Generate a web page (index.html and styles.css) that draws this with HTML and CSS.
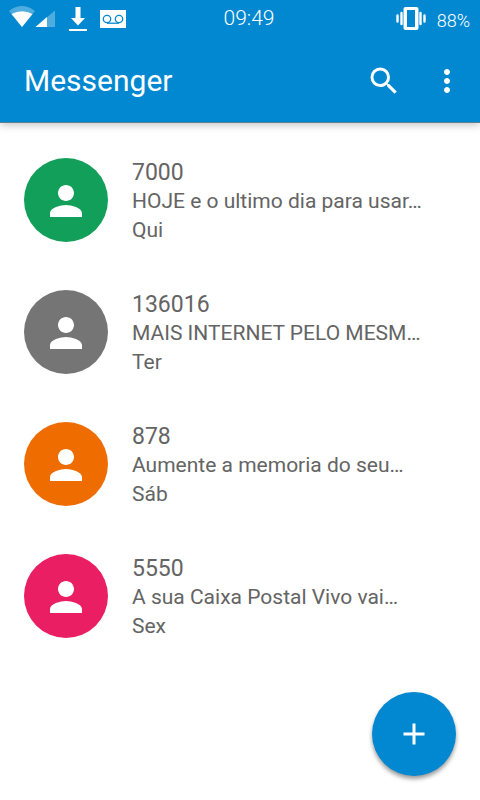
FILE: index.html
```html
<!DOCTYPE html>
<html lang="pt-BR">
<head>
<meta charset="utf-8">
<meta name="viewport" content="width=device-width, initial-scale=1">
<title>Messenger</title>
<link rel="stylesheet" href="styles.css">
</head>
<body>
<header class="top">
  <div class="status">
    <div class="status-side">
      <svg class="signal" width="48" height="38" viewBox="0 0 48 38" aria-hidden="true">
        <path class="dim" d="M1 11Q14 1 27 11L14 27Z"/>
        <path class="solid" d="M3.500 14Q14 8.500 24.500 14L14 27Z"/>
        <path class="dim" d="M47 10.500V27H27.500Z"/>
        <path class="solid" d="M39 17V27H27.500Z"/>
      </svg>
      <svg width="18" height="38" viewBox="0 0 18 38" aria-hidden="true">
        <path class="solid" d="M6.500 7H11.500V18H16L9 25.500L2 18H6.500ZM0 29H18V31H0Z"/>
      </svg>
      <svg width="26" height="38" viewBox="0 0 26 38" aria-hidden="true">
        <path class="solid" d="M0 10H26V28H0Z"/>
        <g class="tape"><circle cx="7" cy="19" r="3.700"/><circle cx="19" cy="19" r="3.700"/><path d="M7 23.200H19"/></g>
      </svg>
    </div>
    <time class="clock">09:49</time>
    <div class="status-side status-end">
      <svg width="30" height="38" viewBox="0 0 30 38" aria-hidden="true">
        <path class="solid" fill-rule="evenodd" d="M9.500 7H20.500Q22.500 7 22.500 9V28Q22.500 30 20.500 30H9.500Q7.500 30 7.500 28V9Q7.500 7 9.500 7ZM11 10V27H19V10Z"/>
        <path class="buzz" d="M1.500 15.500V21.500M5.500 13V24M24.500 13V24M28.500 15.500V21.500"/>
      </svg>
      <span class="battery">88%</span>
    </div>
  </div>
  <div class="bar">
    <h1>Messenger</h1>
    <button class="icon-button" type="button" aria-label="Pesquisar">
      <svg width="36" height="36" viewBox="0 0 24 24"><path class="solid" d="M15.500 14h-.79l-.28-.27A6.471 6.471 0 0 0 16 9.500 6.500 6.500 0 1 0 9.500 16c1.610 0 3.090-.59 4.230-1.570l.27.28v.79l5 4.990L20.490 19l-4.990-5zm-6 0C7.010 14 5 11.990 5 9.500S7.010 5 9.500 5 14 7.010 14 9.500 11.990 14 9.500 14z"/></svg>
    </button>
    <button class="icon-button" type="button" aria-label="Mais opções">
      <svg width="36" height="36" viewBox="0 0 24 24"><path class="solid" d="M12 8c1.100 0 2-.9 2-2s-.9-2-2-2-2 .9-2 2 .9 2 2 2zm0 2c-1.100 0-2 .9-2 2s.9 2 2 2 2-.9 2-2-.9-2-2-2zm0 6c-1.100 0-2 .9-2 2s.9 2 2 2 2-.9 2-2-.9-2-2-2z"/></svg>
    </button>
  </div>
</header>
<main>
  <ul class="threads">
    <li class="thread">
      <span class="avatar green"><svg width="48" height="48" viewBox="0 0 24 24" aria-hidden="true"><path class="solid" d="M12 12c2.210 0 4-1.790 4-4s-1.790-4-4-4-4 1.790-4 4 1.790 4 4 4zm0 2c-2.670 0-8 1.340-8 4v2h16v-2c0-2.660-5.330-4-8-4z"/></svg></span>
      <div class="text"><h2>7000</h2><p>HOJE e o ultimo dia para usar…</p><p>Qui</p></div>
    </li>
    <li class="thread">
      <span class="avatar gray"><svg width="48" height="48" viewBox="0 0 24 24" aria-hidden="true"><path class="solid" d="M12 12c2.210 0 4-1.790 4-4s-1.790-4-4-4-4 1.790-4 4 1.790 4 4 4zm0 2c-2.670 0-8 1.340-8 4v2h16v-2c0-2.660-5.330-4-8-4z"/></svg></span>
      <div class="text"><h2>136016</h2><p>MAIS INTERNET PELO MESM…</p><p>Ter</p></div>
    </li>
    <li class="thread">
      <span class="avatar orange"><svg width="48" height="48" viewBox="0 0 24 24" aria-hidden="true"><path class="solid" d="M12 12c2.210 0 4-1.790 4-4s-1.790-4-4-4-4 1.790-4 4 1.790 4 4 4zm0 2c-2.670 0-8 1.340-8 4v2h16v-2c0-2.660-5.330-4-8-4z"/></svg></span>
      <div class="text"><h2>878</h2><p>Aumente a memoria do seu…</p><p>Sáb</p></div>
    </li>
    <li class="thread">
      <span class="avatar pink"><svg width="48" height="48" viewBox="0 0 24 24" aria-hidden="true"><path class="solid" d="M12 12c2.210 0 4-1.790 4-4s-1.790-4-4-4-4 1.790-4 4 1.790 4 4 4zm0 2c-2.670 0-8 1.340-8 4v2h16v-2c0-2.660-5.330-4-8-4z"/></svg></span>
      <div class="text"><h2>5550</h2><p>A sua Caixa Postal Vivo vai…</p><p>Sex</p></div>
    </li>
  </ul>
</main>
<button class="compose" type="button" aria-label="Nova mensagem">
  <svg width="36" height="36" viewBox="0 0 36 36"><path class="solid" d="M16.500 7.500H19.500V16.500H28.500V19.500H19.500V28.500H16.500V19.500H7.500V16.500H16.500Z"/></svg>
</button>
</body>
</html>
```
FILE: styles.css
```css
* {
  box-sizing: border-box;
}

body {
  margin: 0;
  min-height: 100vh;
  background: #fff;
  color: #646464;
  font-family: Roboto, "Liberation Sans", sans-serif;
}

h1, h2, p, ul {
  margin: 0;
  padding: 0;
  font-weight: 400;
}

svg {
  display: block;
  flex: none;
}

.solid {
  fill: #fff;
}

.dim {
  fill: #fff;
  opacity: 0.3;
}

.tape {
  fill: none;
  stroke: #0288d1;
  stroke-width: 1.3;
}

.buzz {
  fill: none;
  stroke: #fff;
  stroke-width: 2.4;
  stroke-linecap: round;
}

.top {
  background: #0288d1;
  color: #fff;
  border-bottom: 1px solid #5c7f92;
  box-shadow: 0 2px 8px rgba(0, 0, 0, 0.24);
}

.status {
  display: grid;
  grid-template-columns: 1fr auto 1fr;
  align-items: start;
  height: 40px;
  padding: 0 10px 0 8px;
}

.status-side {
  display: flex;
  align-items: flex-start;
  gap: 13px;
}

.status-end {
  justify-content: flex-end;
  gap: 11px;
}

.clock {
  padding-left: 20px;
  font-size: 21px;
  font-weight: 300;
  line-height: 36px;
}

.battery {
  font-size: 18px;
  font-weight: 300;
  line-height: 42px;
}

.bar {
  display: flex;
  align-items: center;
  height: 82px;
  padding: 0 15px 0 24px;
}

.bar h1 {
  flex: 1;
  font-size: 30px;
  line-height: 36px;
}

button {
  padding: 0;
  border: 0;
  background: none;
  cursor: pointer;
}

.icon-button {
  display: grid;
  place-items: center;
  width: 36px;
  height: 48px;
}

.icon-button + .icon-button {
  margin-left: 27px;
}

.threads {
  list-style: none;
  padding-top: 11px;
}

.thread {
  display: flex;
  align-items: center;
  gap: 24px;
  height: 132px;
  padding: 0 24px;
}

.avatar {
  display: grid;
  place-items: center;
  flex: none;
  width: 84px;
  height: 84px;
  padding-top: 2px;
  border-radius: 50%;
}

.green {
  background: #129f5a;
}

.gray {
  background: #757575;
}

.orange {
  background: #ef6c00;
}

.pink {
  background: #e91e63;
}

.text {
  min-width: 0;
  padding-top: 2px;
}

.text h2 {
  font-size: 23px;
  line-height: 29px;
}

.text p {
  font-size: 21px;
  line-height: 29px;
  white-space: nowrap;
}

.compose {
  position: fixed;
  right: 24px;
  bottom: 24px;
  display: grid;
  place-items: center;
  width: 84px;
  height: 84px;
  border-radius: 50%;
  background: #0288d1;
  box-shadow: 0 3px 4px rgba(0, 0, 0, 0.4);
}
```
